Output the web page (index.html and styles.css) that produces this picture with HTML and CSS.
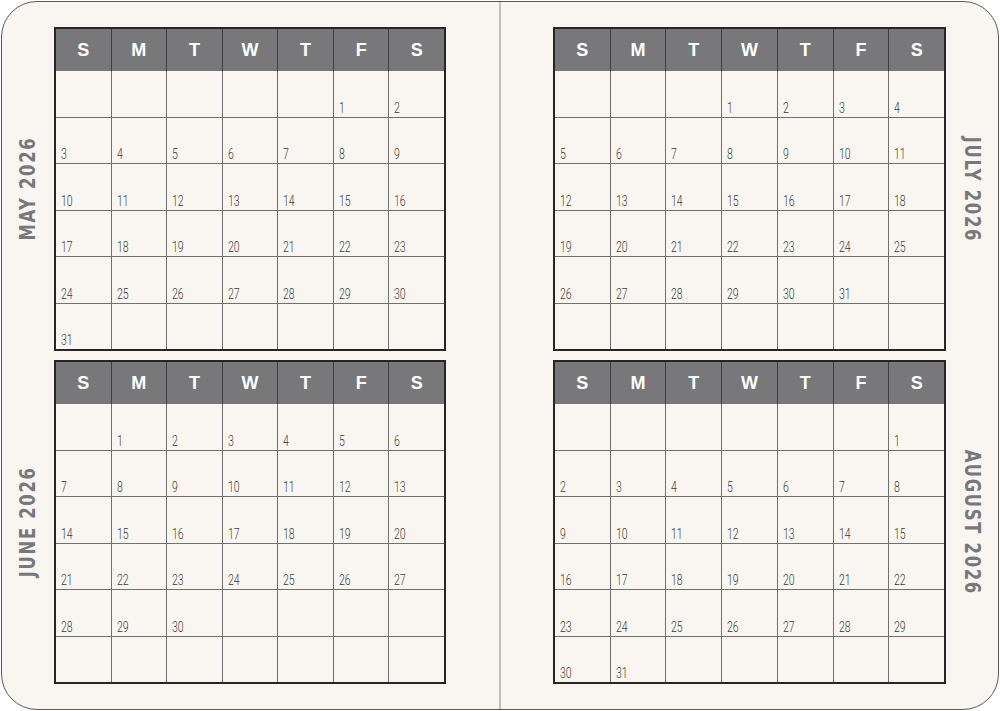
FILE: index.html
```html
<!DOCTYPE html>
<html>
<head>
<meta charset="utf-8">
<link rel="stylesheet" href="styles.css">
</head>
<body>
<div class="page">
  <div class="half left">
    <div class="label"><span class="month up">MAY 2026</span></div>
    <div class="cal">
      <div class="head"><div>S</div><div>M</div><div>T</div><div>W</div><div>T</div><div>F</div><div>S</div></div>
      <div class="days">
        <div></div><div></div><div></div><div></div><div></div><div><span>1</span></div><div><span>2</span></div>
        <div><span>3</span></div><div><span>4</span></div><div><span>5</span></div><div><span>6</span></div><div><span>7</span></div><div><span>8</span></div><div><span>9</span></div>
        <div><span>10</span></div><div><span>11</span></div><div><span>12</span></div><div><span>13</span></div><div><span>14</span></div><div><span>15</span></div><div><span>16</span></div>
        <div><span>17</span></div><div><span>18</span></div><div><span>19</span></div><div><span>20</span></div><div><span>21</span></div><div><span>22</span></div><div><span>23</span></div>
        <div><span>24</span></div><div><span>25</span></div><div><span>26</span></div><div><span>27</span></div><div><span>28</span></div><div><span>29</span></div><div><span>30</span></div>
        <div><span>31</span></div><div></div><div></div><div></div><div></div><div></div><div></div>
      </div>
    </div>
    <div class="label"><span class="month up">JUNE 2026</span></div>
    <div class="cal">
      <div class="head"><div>S</div><div>M</div><div>T</div><div>W</div><div>T</div><div>F</div><div>S</div></div>
      <div class="days">
        <div></div><div><span>1</span></div><div><span>2</span></div><div><span>3</span></div><div><span>4</span></div><div><span>5</span></div><div><span>6</span></div>
        <div><span>7</span></div><div><span>8</span></div><div><span>9</span></div><div><span>10</span></div><div><span>11</span></div><div><span>12</span></div><div><span>13</span></div>
        <div><span>14</span></div><div><span>15</span></div><div><span>16</span></div><div><span>17</span></div><div><span>18</span></div><div><span>19</span></div><div><span>20</span></div>
        <div><span>21</span></div><div><span>22</span></div><div><span>23</span></div><div><span>24</span></div><div><span>25</span></div><div><span>26</span></div><div><span>27</span></div>
        <div><span>28</span></div><div><span>29</span></div><div><span>30</span></div><div></div><div></div><div></div><div></div>
        <div></div><div></div><div></div><div></div><div></div><div></div><div></div>
      </div>
    </div>
  </div>
  <div class="half right">
    <div class="cal">
      <div class="head"><div>S</div><div>M</div><div>T</div><div>W</div><div>T</div><div>F</div><div>S</div></div>
      <div class="days">
        <div></div><div></div><div></div><div><span>1</span></div><div><span>2</span></div><div><span>3</span></div><div><span>4</span></div>
        <div><span>5</span></div><div><span>6</span></div><div><span>7</span></div><div><span>8</span></div><div><span>9</span></div><div><span>10</span></div><div><span>11</span></div>
        <div><span>12</span></div><div><span>13</span></div><div><span>14</span></div><div><span>15</span></div><div><span>16</span></div><div><span>17</span></div><div><span>18</span></div>
        <div><span>19</span></div><div><span>20</span></div><div><span>21</span></div><div><span>22</span></div><div><span>23</span></div><div><span>24</span></div><div><span>25</span></div>
        <div><span>26</span></div><div><span>27</span></div><div><span>28</span></div><div><span>29</span></div><div><span>30</span></div><div><span>31</span></div><div></div>
        <div></div><div></div><div></div><div></div><div></div><div></div><div></div>
      </div>
    </div>
    <div class="label"><span class="month down">JULY 2026</span></div>
    <div class="cal">
      <div class="head"><div>S</div><div>M</div><div>T</div><div>W</div><div>T</div><div>F</div><div>S</div></div>
      <div class="days">
        <div></div><div></div><div></div><div></div><div></div><div></div><div><span>1</span></div>
        <div><span>2</span></div><div><span>3</span></div><div><span>4</span></div><div><span>5</span></div><div><span>6</span></div><div><span>7</span></div><div><span>8</span></div>
        <div><span>9</span></div><div><span>10</span></div><div><span>11</span></div><div><span>12</span></div><div><span>13</span></div><div><span>14</span></div><div><span>15</span></div>
        <div><span>16</span></div><div><span>17</span></div><div><span>18</span></div><div><span>19</span></div><div><span>20</span></div><div><span>21</span></div><div><span>22</span></div>
        <div><span>23</span></div><div><span>24</span></div><div><span>25</span></div><div><span>26</span></div><div><span>27</span></div><div><span>28</span></div><div><span>29</span></div>
        <div><span>30</span></div><div><span>31</span></div><div></div><div></div><div></div><div></div><div></div>
      </div>
    </div>
    <div class="label"><span class="month down">AUGUST 2026</span></div>
  </div>
</div>
</body>
</html>
```
FILE: styles.css
```css
html, body {
  margin: 0;
  padding: 0;
  background: #ffffff;
}

.page {
  box-sizing: border-box;
  width: 998px;
  height: 709px;
  margin: 1px;
  border: 1px solid #5c5a57;
  border-radius: 36px;
  background: #f9f6f1;
  display: grid;
  grid-template-columns: 497px 1fr;
  overflow: hidden;
}

.half {
  display: grid;
  grid-template-rows: 324px 324px;
  row-gap: 9px;
  padding-top: 25px;
}

.left {
  grid-template-columns: 52px 392px;
}

.right {
  border-left: 2px solid #c4bfb8;
  padding-left: 52px;
  grid-template-columns: 393px 1fr;
}

.label {
  display: flex;
  align-items: center;
  justify-content: center;
}

.month {
  writing-mode: vertical-rl;
  font-family: "DejaVu Sans Condensed", "DejaVu Sans", sans-serif;
  font-weight: bold;
  font-size: 22px;
  letter-spacing: 2px;
  color: #78787b;
  line-height: 1;
  white-space: nowrap;
}

.month.up {
  transform: rotate(180deg) scaleY(0.83);
}

.month.down {
  transform: scaleY(0.83);
}

.cal {
  box-sizing: border-box;
  border: 2px solid #262626;
  display: grid;
  grid-template-rows: 42px 1fr;
  background: #6e6e6e;
}

.head {
  display: grid;
  grid-template-columns: repeat(7, 1fr);
  gap: 1px;
  background: #3e3e3e;
}

.head div {
  background: #78787b;
  color: #ffffff;
  font-family: "Liberation Sans", Arial, sans-serif;
  font-weight: bold;
  font-size: 18px;
  display: flex;
  align-items: center;
  justify-content: center;
}

.days {
  display: grid;
  grid-template-columns: repeat(7, 1fr);
  grid-template-rows: repeat(6, 1fr);
  gap: 1px;
  background: #707070;
}

.days div {
  background: #f9f6f1;
  display: flex;
  align-items: flex-end;
  padding: 0 0 2px 5px;
}

.days span {
  display: inline-block;
  font-family: Roboto, "DejaVu Sans", sans-serif;
  font-weight: 300;
  font-size: 14px;
  line-height: 1;
  color: #3a3a3a;
  transform: scaleX(0.75);
  transform-origin: left bottom;
}
```
